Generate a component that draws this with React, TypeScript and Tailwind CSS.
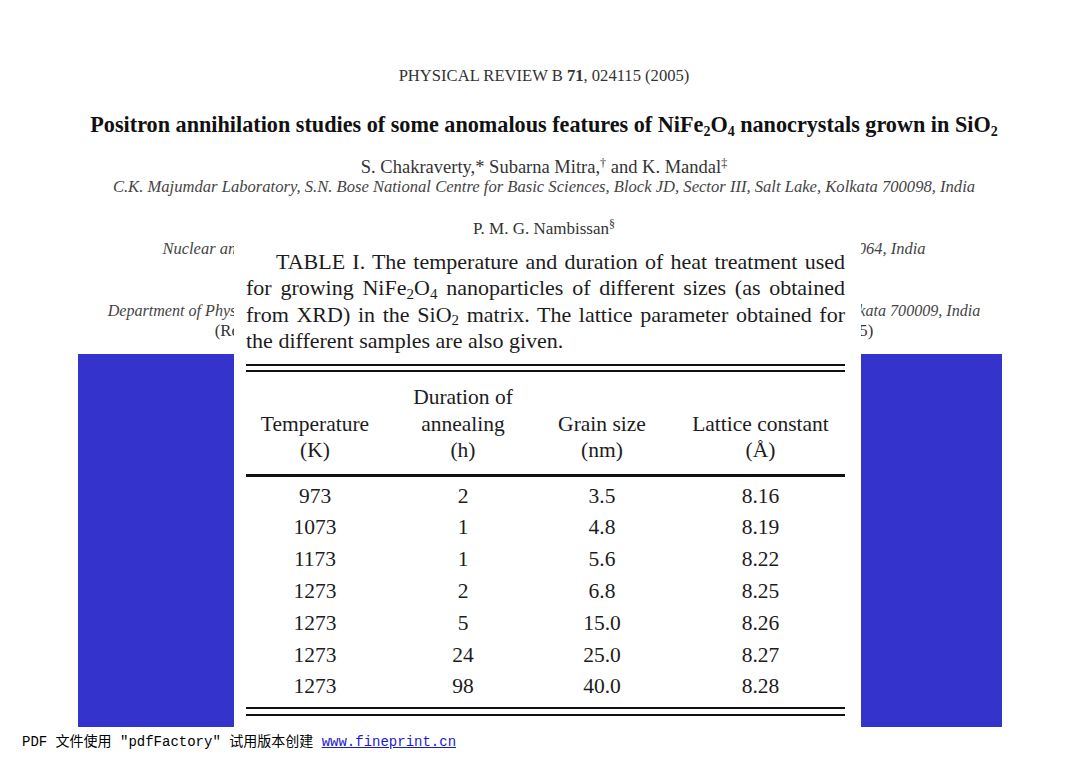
import React from "react";

const serif = { fontFamily: '"Liberation Serif", "Times New Roman", serif' };

const rows = [
  ["973", "2", "3.5", "8.16"],
  ["1073", "1", "4.8", "8.19"],
  ["1173", "1", "5.6", "8.22"],
  ["1273", "2", "6.8", "8.25"],
  ["1273", "5", "15.0", "8.26"],
  ["1273", "24", "25.0", "8.27"],
  ["1273", "98", "40.0", "8.28"],
];

const cols = "grid grid-cols-[138px_158px_120px_183px] text-center";

// Table overlay pasted over the page
const TableOverlay = () => (
  <div className="absolute left-[234px] top-[-116px] w-[627px] h-[492px] bg-white pl-[12px] pr-[16px] pt-[11px] text-[#1c1c1c]" style={serif}>
    <p className="text-[22px] leading-[26.3px] text-justify indent-[30px]">
      TABLE I. The temperature and duration of heat treatment used for growing NiFe<sub className="text-[15px]">2</sub>O<sub className="text-[15px]">4</sub> nanoparticles of different sizes (as obtained from XRD) in the SiO<sub className="text-[15px]">2</sub> matrix. The lattice parameter obtained for the different samples are also given.
    </p>
    <div className="mt-[10px] h-[8px] border-t-2 border-b-2 border-[#111]" />
    <div className={`${cols} mt-[12px] pb-[10px] border-b-[3px] border-[#111] text-[21.5px] leading-[26.5px]`}>
      <div className="flex flex-col justify-end">
        <span>Temperature</span>
        <span>(K)</span>
      </div>
      <div className="flex flex-col">
        <span>Duration of</span>
        <span>annealing</span>
        <span>(h)</span>
      </div>
      <div className="flex flex-col justify-end">
        <span>Grain size</span>
        <span>(nm)</span>
      </div>
      <div className="flex flex-col justify-end pl-[14px]">
        <span>Lattice constant</span>
        <span>(Å)</span>
      </div>
    </div>
    <div className="pt-[4px]">
      {rows.map((r, i) => (
        <div key={i} className={`${cols} text-[21.5px] leading-[31.8px]`}>
          <span>{r[0]}</span>
          <span>{r[1]}</span>
          <span>{r[2]}</span>
          <span className="pl-[14px]">{r[3]}</span>
        </div>
      ))}
    </div>
    <div className="mt-[4px] h-[9px] border-t-2 border-b-2 border-[#111]" />
  </div>
);

export default function App() {
  return (
    <div className="w-[1080px] h-[763px] bg-white overflow-hidden text-[#222]" style={serif}>
      <div className="pt-[66px]">
        <div className="pl-[8px]">
          <div className="h-[20px] leading-[20px] text-center text-[16.6px] text-[#333]">
            PHYSICAL REVIEW B <b>71</b>, 024115 (2005)
          </div>
          <div className="mt-[26px] h-[26px] leading-[26px] text-center text-[22.2px] font-bold text-[#111] whitespace-nowrap">
            Positron annihilation studies of some anomalous features of NiFe<sub className="text-[14px]">2</sub>O<sub className="text-[14px]">4</sub> nanocrystals grown in SiO<sub className="text-[14px]">2</sub>
          </div>
          <div className="mt-[19px] h-[20px] leading-[20px] text-center text-[18.5px] text-[#333]">
            S. Chakraverty,* Subarna Mitra,<sup className="text-[12px]">†</sup> and K. Mandal<sup className="text-[12px]">‡</sup>
          </div>
          <div className="h-[20px] leading-[20px] text-center text-[16.6px] italic text-[#444] whitespace-nowrap">
            C.K. Majumdar Laboratory, S.N. Bose National Centre for Basic Sciences, Block JD, Sector III, Salt Lake, Kolkata 700098, India
          </div>
          <div className="mt-[22px] h-[20px] leading-[20px] text-center text-[17px] text-[#333]">
            P. M. G. Nambissan<sup className="text-[12px]">§</sup>
          </div>
          <div className="h-[20px] leading-[20px] text-center text-[16.5px] italic text-[#444] whitespace-nowrap">
            Nuclear and Atomic Physics Division, Saha Institute of Nuclear Physics, 1/AF Bidhannagar, Kolkata 700064, India
          </div>
          <div className="mt-[42px] h-[20px] leading-[20px] text-center text-[16.1px] italic text-[#444] whitespace-nowrap">
            Department of Physics, Rajabazar Science College, University of Calcutta, 92 Acharya Prafulla Chandra Road, Kolkata 700009, India
          </div>
          <div className="h-[20px] leading-[20px] text-center text-[16.7px] text-[#333] whitespace-nowrap">
            (Received 2 June 2004; revised manuscript received 6 October 2004; published 24 February 2005)
          </div>
        </div>
        <div className="relative mt-[13px]">
          <div className="ml-[78px] w-[924px] h-[373px] bg-[#3434cc]" />
          <TableOverlay />
        </div>
        <div
          className="mt-[7px] pl-[22px] h-[16px] leading-[16px] text-[14px] text-black whitespace-pre"
          style={{ fontFamily: '"Liberation Mono", "Noto Sans CJK SC", monospace' }}
        >
          PDF 文件使用 "pdfFactory" 试用版本创建 <span className="text-[#1a1acc] underline">www.fineprint.cn</span>
        </div>
      </div>
    </div>
  );
}
